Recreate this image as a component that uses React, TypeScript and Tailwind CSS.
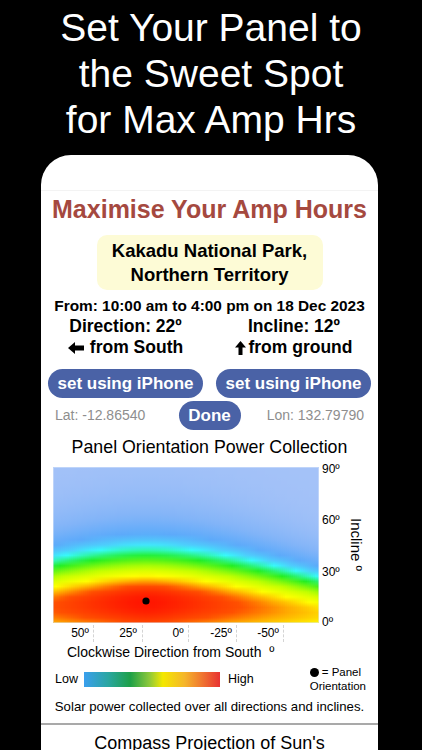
import { useMemo } from 'react'

const W = 266
const H = 156

const STOPS: [number, number[]][] = [
  [0, [164, 194, 248]],
  [0.25, [130, 180, 248]],
  [0.42, [92, 170, 250]],
  [0.52, [76, 208, 252]],
  [0.57, [55, 250, 250]],
  [0.68, [34, 238, 34]],
  [0.8, [192, 255, 0]],
  [0.88, [255, 255, 0]],
  [0.92, [255, 170, 0]],
  [0.95, [255, 80, 0]],
  [1, [255, 21, 0]],
]

function colour(v: number) {
  const x = Math.max(0, Math.min(1, v))
  for (let k = 1; k < STOPS.length; k++) {
    const [b, cb] = STOPS[k]
    const [a, ca] = STOPS[k - 1]
    if (x <= b) {
      const t = (x - a) / (b - a)
      const c = ca.map((n, j) => Math.round(n + (cb[j] - n) * t))
      return `rgb(${c[0]},${c[1]},${c[2]})`
    }
  }
  return 'rgb(255,21,0)'
}

// rough power field: peak around 17º direction, 12º incline
function power(xf: number, yf: number) {
  const deg = (xf - 0.35) * 141
  const cs = Math.cos((deg * Math.PI) / 180)
  const f = 1.012 - 0.0012 * Math.sqrt(deg * deg + 100)
  const sig = 22 + 8 * cs
  const i0 = 12 - 6 * (1 - cs)
  const inc = 90 * (1 - yf)
  const di = inc - i0
  const s = di > 0 ? sig : 30 + 10 * cs
  return f * Math.exp(-(di * di) / (2 * s * s))
}

function Heatmap() {
  const cols = useMemo(() => {
    const out: { x: number; stops: string[] }[] = []
    for (let c = 0; c < W / 2; c++) {
      const xf = (c * 2 + 1) / W
      const stops: string[] = []
      for (let s = 0; s <= 30; s++) stops.push(colour(power(xf, s / 30)))
      out.push({ x: c * 2, stops })
    }
    return out
  }, [])

  return (
    <svg width={W} height={H} viewBox={`0 0 ${W} ${H}`} className="block">
      <defs>
        {cols.map((col, c) => (
          <linearGradient key={c} id={`hm${c}`} x1="0" y1="0" x2="0" y2="1">
            {col.stops.map((s, k) => (
              <stop key={k} offset={k / 30} stopColor={s} />
            ))}
          </linearGradient>
        ))}
      </defs>
      {cols.map((col, c) => (
        <rect key={c} x={col.x} y={0} width={2.4} height={H} fill={`url(#hm${c})`} />
      ))}
      <rect x={0.5} y={0.5} width={W - 1} height={H - 1} fill="none" stroke="#dbe6fb" strokeDasharray="1 1" />
      <circle cx={93} cy={134} r={3.6} fill="#000" />
    </svg>
  )
}

function LeftArrow() {
  return (
    <svg width="16" height="12" viewBox="0 0 16 12" className="inline-block">
      <polygon points="0,6 7,0 7,3.5 16,3.5 16,8.5 7,8.5 7,12" fill="#000" />
    </svg>
  )
}

function UpArrow() {
  return (
    <svg width="11" height="14" viewBox="0 0 11 14" className="inline-block">
      <polygon points="5.5,0 11,6.5 7.5,6.5 7.5,14 3.5,14 3.5,6.5 0,6.5" fill="#000" />
    </svg>
  )
}

const xLabels = [
  { t: '50º', x: 27 },
  { t: '25º', x: 75 },
  { t: '0º', x: 125 },
  { t: '-25º', x: 168 },
  { t: '-50º', x: 215 },
]
const xTicks = [40, 89, 135, 183, 230]
const yLabels = [
  { t: '90º', y: 2 },
  { t: '60º', y: 53 },
  { t: '30º', y: 105 },
  { t: '0º', y: 155 },
]

export default function App() {
  return (
    <div
      className="w-[422px] h-[750px] bg-black overflow-hidden flex flex-col"
      style={{ fontFamily: '"Liberation Sans", Arial, sans-serif' }}
    >
      <div className="pt-[5px] text-center text-white text-[39px] leading-[46px]">
        <p>Set Your Panel to</p>
        <p>the Sweet Spot</p>
        <p>for Max Amp Hrs</p>
      </div>

      <div className="mt-[12px] ml-[41px] mr-[44px] flex-1 bg-white rounded-t-[30px] flex flex-col text-black">
        <div className="h-[36px] border-b border-[#f3f3f3]" />

        <h1 className="mt-[3px] h-[30px] leading-[30px] text-center text-[25px] font-bold text-[#a5493f]">
          Maximise Your Amp Hours
        </h1>

        <div className="mt-[11px] mx-auto w-[226px] h-[55px] rounded-[10px] bg-[#fdfbd6] flex flex-col items-center justify-center text-[18.5px] leading-[24px] font-bold">
          <span>Kakadu National Park,</span>
          <span>Northern Territory</span>
        </div>

        <p className="mt-[6px] text-center text-[15.4px] leading-[20px] font-bold">
          From: 10:00 am to 4:00 pm on 18 Dec 2023
        </p>

        <div className="grid grid-cols-[169px_1fr] text-[17.5px] leading-[21px] font-bold">
          <div className="flex flex-col items-center">
            <span>Direction: 22º</span>
            <span className="flex items-center gap-[6px]">
              <LeftArrow />
              from South
            </span>
          </div>
          <div className="flex flex-col items-center">
            <span>Incline: 12º</span>
            <span className="flex items-center gap-[2px]">
              <UpArrow />
              from ground
            </span>
          </div>
        </div>

        <div className="mt-[11px] px-[7px] flex justify-between">
          <button className="w-[155px] h-[29px] rounded-full bg-[#4a62a6] text-white text-[17px] font-bold">
            set using iPhone
          </button>
          <button className="w-[155px] h-[29px] rounded-full bg-[#4a62a6] text-white text-[17px] font-bold">
            set using iPhone
          </button>
        </div>

        <div className="mt-[3px] h-[29px] px-[14px] flex items-center justify-between text-[14px] text-[#8e8e8e]">
          <span className="w-[100px]">Lat: -12.86540</span>
          <button className="w-[62px] h-[29px] rounded-full bg-[#4a62a6] text-white text-[17px] font-bold">
            Done
          </button>
          <span className="w-[100px] text-right">Lon: 132.79790</span>
        </div>

        <p className="mt-[6px] text-center text-[17.8px] leading-[22px]">Panel Orientation Power Collection</p>

        <div className="mt-[9px] pl-[12px] flex">
          <div className="flex flex-col">
            <Heatmap />
            <div className="relative w-[266px] h-[20px] text-[12px]">
              {xTicks.map((x) => (
                <div key={x} className="absolute top-[2px] h-[17px] border-l border-dashed border-[#d4d4d4]" style={{ left: x }} />
              ))}
              {xLabels.map((l) => (
                <span
                  key={l.t}
                  className="absolute top-[3px] leading-[14px] -translate-x-1/2"
                  style={{ left: l.x }}
                >
                  {l.t}
                </span>
              ))}
            </div>
          </div>
          <div className="relative w-[26px] h-[156px] text-[12px]">
            {yLabels.map((l) => (
              <span key={l.t} className="absolute left-[3px] leading-[14px]" style={{ top: l.y - 7 }}>
                {l.t}
              </span>
            ))}
          </div>
          <div className="h-[156px] w-[22px] flex items-center justify-center">
            <span className="[writing-mode:vertical-rl] text-[15px] leading-[18px]">Incline º</span>
          </div>
        </div>

        <p className="pl-[26px] text-[14px] leading-[18px]">Clockwise Direction from South&nbsp;&nbsp;º</p>

        <div className="mt-[4px] h-[28px] pl-[14px] pr-[12px] flex items-center text-[12.5px]">
          <span>Low</span>
          <div className="ml-[6px] w-[136px] h-[15px] bg-[linear-gradient(to_right,#3a9fee_0%,#2aa6a0_18%,#1ea048_34%,#8cc83a_48%,#f4e800_58%,#f5b52a_74%,#f07a30_86%,#e83232_100%)]" />
          <span className="ml-[8px]">High</span>
          <div className="ml-auto flex flex-col text-[11.5px] leading-[14px]">
            <span className="flex items-center gap-[3px]">
              <span className="inline-block w-[9px] h-[9px] rounded-full bg-black" />= Panel
            </span>
            <span>Orientation</span>
          </div>
        </div>

        <p className="mt-[5px] text-center text-[13.2px] leading-[18px]">
          Solar power collected over all directions and inclines.
        </p>

        <div className="mt-[7px] h-[2px] bg-[#a9a9a9]" />

        <p className="mt-[6px] text-center text-[18px] leading-[24px]">Compass Projection of Sun's</p>
      </div>
    </div>
  )
}
